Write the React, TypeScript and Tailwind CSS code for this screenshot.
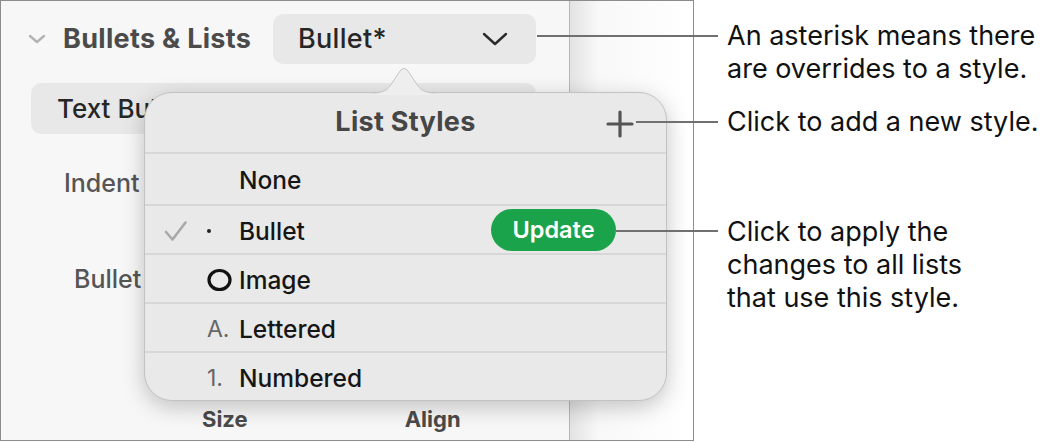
import React from 'react';

const font = { fontFamily: 'Inter, "Noto Sans", sans-serif' };

const rows = [
  { label: 'None', marker: null as React.ReactNode, checked: false, update: false },
  { label: 'Bullet', marker: <span className="block w-[4px] h-[4px] rounded-full bg-[#222]" />, checked: true, update: true },
  {
    label: 'Image',
    marker: (
      <svg width="26" height="24" viewBox="0 0 26 24">
        <ellipse cx="12.5" cy="12" rx="10.5" ry="9.5" fill="none" stroke="#111" strokeWidth="3.2" />
      </svg>
    ),
    checked: false,
    update: false,
  },
  { label: 'Lettered', marker: <span className="text-[23px] text-[#666] font-normal">A.</span>, checked: false, update: false },
  { label: 'Numbered', marker: <span className="text-[23px] text-[#666] font-normal">1.</span>, checked: false, update: false },
];

function Callout({ top, left, width }: { top: number; left: number; width: number }) {
  return <div className="absolute h-[2px] bg-[#707070]" style={{ top, left, width }} />;
}

export default function App() {
  return (
    <div className="relative w-[1048px] h-[442px] bg-white overflow-hidden" style={font}>
      {/* framed inspector */}
      <div className="flex w-[694px] h-[441px] border border-[#8c8c8c]">
        <div className="w-[569px] h-full bg-[#f7f7f7] border-r border-[#b8b8b8] pt-[13px]">
          <div className="flex items-center h-[50px]">
            <svg className="ml-[27px]" width="18" height="10" viewBox="0 0 18 10">
              <path d="M2 2 L9 8 L16 2" fill="none" stroke="#b3b3b3" strokeWidth="2.4" strokeLinecap="round" strokeLinejoin="round" />
            </svg>
            <span className="ml-[17px] w-[210px] whitespace-nowrap text-[27px] font-bold text-[#4b4b4b] tracking-[0.3px]">Bullets &amp; Lists</span>
            <div className="w-[263px] h-[50px] rounded-[10px] bg-[#e8e8e8] flex items-center pl-[25px] pr-[28px]">
              <span className="text-[27px] font-medium text-[#262626] tracking-[0.3px]">Bullet*</span>
              <svg className="ml-auto" width="26" height="14" viewBox="0 0 26 14">
                <path d="M2 2 L13 12 L24 2" fill="none" stroke="#2b2b2b" strokeWidth="2.4" strokeLinecap="round" strokeLinejoin="round" />
              </svg>
            </div>
          </div>
          <div className="ml-[30px] mt-[19px] w-[505px] h-[51px] rounded-[10px] bg-[#e8e8e8] flex items-center pl-[26px]">
            <span className="text-[26px] font-medium text-[#262626]">Text Bullets</span>
          </div>
          <div className="mt-[35px] pl-[63px] h-[30px] flex items-center text-[25px] font-medium text-[#555]">Indent</div>
          <div className="mt-[66px] pl-[73px] h-[30px] flex items-center text-[25px] font-medium text-[#555]">Bullet</div>
          <div className="mt-[109px] flex h-[30px] items-center text-[22px] font-bold text-[#4a4a4a]">
            <span className="ml-[201px]">Size</span>
            <span className="ml-[157px]">Align</span>
          </div>
        </div>
        <div className="flex-1 h-full bg-[linear-gradient(to_right,#e3e3e3,#f8f8f8_28px,#ffffff)]" />
      </div>

      {/* popover */}
      <div className="absolute left-[144px] top-[92px] w-[523px] h-[309px] rounded-[28px] bg-[#e9e9e9] border border-[#c2c2c2] shadow-[0_6px_22px_rgba(0,0,0,0.22)]">
        <div className="relative h-[59px] flex items-center justify-center">
          <span className="text-[27px] font-bold text-[#464646] tracking-[0.3px]">List Styles</span>
          <svg className="absolute left-[461px] top-[17px]" width="28" height="28" viewBox="0 0 28 28">
            <path d="M14 2 V26 M2 14 H26" stroke="#555" strokeWidth="3.2" strokeLinecap="round" />
          </svg>
        </div>
        {rows.map((r, i) => (
          <div
            key={r.label}
            className={`flex items-center pt-[3px] border-t-2 border-[#d7d7d7] ${i === 0 ? 'h-[52px]' : 'h-[49px]'}`}
          >
            <div className="w-[62px] flex justify-end pr-[19px]">
              {r.checked && (
                <svg width="24" height="22" viewBox="0 0 24 22">
                  <path d="M2 12 L8.5 19.5 L21.5 2.5" fill="none" stroke="#a9a9a9" strokeWidth="2.6" strokeLinecap="round" strokeLinejoin="round" />
                </svg>
              )}
            </div>
            <div className="w-[32px] flex items-center">{r.marker}</div>
            <span className="text-[24.5px] font-medium text-[#161616]">{r.label}</span>
            {r.update && (
              <div className="ml-auto mr-[50px] -mt-[3px] w-[125px] h-[42px] rounded-full bg-[#1aa34a] flex items-center justify-center text-[23.5px] font-semibold text-white">
                Update
              </div>
            )}
          </div>
        ))}
      </div>

      {/* popover arrow */}
      <svg className="absolute left-[372px] top-[67px]" width="64" height="28" viewBox="0 0 64 28">
        <path d="M0 26 C10 26 14 24 18 19 L28 4 Q32 -1 36 4 L46 19 C50 24 54 26 64 26 L64 28 L0 28 Z" fill="#eeeeee" />
        <path d="M0 26 C10 26 14 24 18 19 L28 4 Q32 -1 36 4 L46 19 C50 24 54 26 64 26" fill="none" stroke="#c4c4c4" strokeWidth="1" />
      </svg>

      {/* callouts */}
      <Callout top={35} left={537} width={181} />
      <Callout top={121} left={636} width={82} />
      <Callout top={230} left={616} width={102} />

      <div className="absolute left-[727px] top-[19px] text-[27px] leading-[33px] text-[#111] whitespace-nowrap">
        <div>An asterisk means there</div>
        <div>are overrides to a style.</div>
      </div>
      <div className="absolute left-[727px] top-[105px] text-[27px] leading-[33px] text-[#111] whitespace-nowrap">
        <div>Click to add a new style.</div>
      </div>
      <div className="absolute left-[727px] top-[215px] text-[27px] leading-[33px] text-[#111] whitespace-nowrap">
        <div>Click to apply the</div>
        <div>changes to all lists</div>
        <div>that use this style.</div>
      </div>
    </div>
  );
}
